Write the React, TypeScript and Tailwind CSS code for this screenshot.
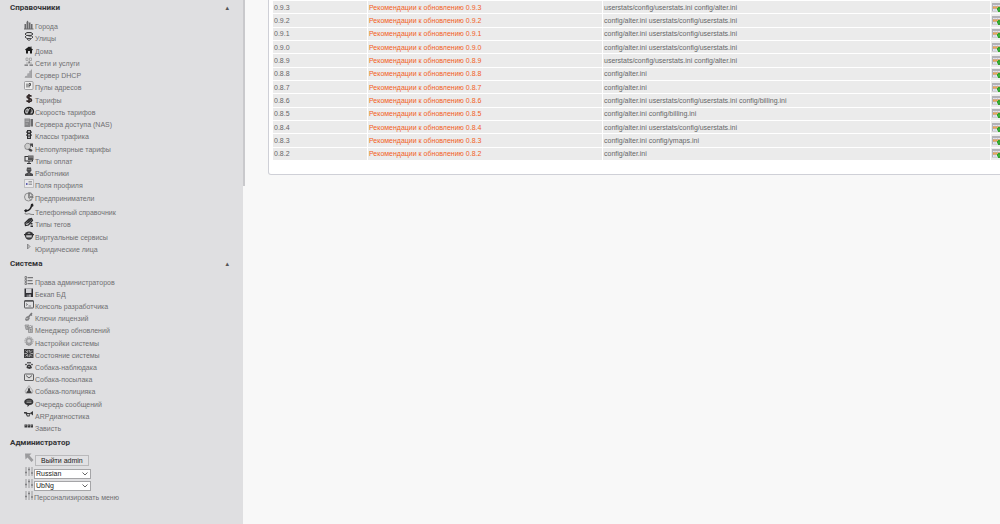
import type { ReactNode } from "react";

type MenuItem = { label: string; icon: ReactNode; row?: string };

const short = "h-3";
const tall = "h-[13px]";

const Icon = ({ children }: { children: ReactNode }) => (
  <svg viewBox="0 0 20 20" className="size-[10px] shrink-0 overflow-visible" fill="none" aria-hidden="true">
    {children}
  </svg>
);

const Sliders = () => (
  <Icon>
    <path d="M4 0v18M10 0v18M16 0v18" stroke="#9a9a9c" strokeWidth="2" />
    <path d="M2 11h4M8 5h4M14 12h4" stroke="#808082" strokeWidth="3" />
  </Icon>
);

const directories: MenuItem[] = [
  {
    label: "Города",
    icon: <path d="M1 17V8h3v9zM5 17V4l2-3 2 3v13zM10 17V5h3v12zM14 17V8h3v9zM0 17h19v2H0z" fill="#68686a" />,
  },
  {
    label: "Улицы",
    row: tall,
    icon: (
      <>
        <path d="M6 1h8l4 3-4 3H5L2 4z" fill="#ccc" stroke="#3d3d3f" strokeWidth="2" />
        <path d="M5 7l-3 3 4 3h8M9 8h6l3 2-3 3-5 4-4-3" stroke="#4a4a4c" strokeWidth="2" />
      </>
    ),
  },
  {
    label: "Дома",
    icon: <path d="M10 3L2 9l2 2v6h4v-5h4v5h4v-6l2-2-3-2V3h-2v2z" fill="#1c1c1c" />,
  },
  {
    label: "Сети и услуги",
    icon: (
      <>
        <path d="M4 2h4v5H4zM11 2h4v5h-4zM10 9v4M4 12h12" stroke="#98989a" strokeWidth="1.5" />
        <path d="M1 16h7M11 16h7M9 10h3" stroke="#6b6b6d" strokeWidth="2.5" />
      </>
    ),
  },
  {
    label: "Сервер DHCP",
    icon: (
      <>
        <path d="M1 18h14V2l-4 2v4L7 9v4l-4 1z" fill="#b3b3b5" />
        <path d="M4 17v-3M8 17V9M12 17V4M15 18V1" stroke="#929294" strokeWidth="1.5" />
      </>
    ),
  },
  {
    label: "Пулы адресов",
    row: tall,
    icon: (
      <>
        <rect x="1" y="1" width="17" height="16" rx="2" fill="#eee" stroke="#8a8a8c" strokeWidth="1.5" />
        <path d="M6 5v8M10 13V5h3v4h-3" stroke="#555" strokeWidth="2" />
      </>
    ),
  },
  {
    label: "Тарифы",
    icon: <path d="M15 5c-2-3-9-3-9 1 0 4 9 2 9 6 0 4-8 4-10 1M10 0v18" stroke="#302626" strokeWidth="3" />,
  },
  {
    label: "Скорость тарифов",
    icon: (
      <>
        <path d="M3 16a9 8 0 1 1 14 0z" fill="#b5b5b7" stroke="#1c1c1c" strokeWidth="2.5" />
        <path d="M8 15l4-9h2l-2 9zM4 10h3M9 4v2M14 10h2" fill="#1c1c1c" stroke="#1c1c1c" strokeWidth="1.5" />
      </>
    ),
  },
  {
    label: "Сервера доступа (NAS)",
    icon: (
      <>
        <path d="M1 1h11v17H1z" fill="#858587" />
        <path d="M13 2h5v15h-5z" fill="#6a6a6c" />
        <path d="M3 4h7M3 7h7M3 12h5" stroke="#b5b5b7" strokeWidth="1.5" />
      </>
    ),
  },
  {
    label: "Классы трафика",
    row: tall,
    icon: (
      <>
        <path d="M6 0h8v18H6zM4 3h12l-1 3H5zM4 9h12l-1 3H5z" fill="#303032" />
        <path d="M10 2v3M10 8v3M10 13v3" stroke="#d8d8da" strokeWidth="3" />
      </>
    ),
  },
  {
    label: "Непопулярные тарифы",
    icon: (
      <>
        <path d="M2 9a6 6 0 1 1 11 0l-5 4-5-1z" fill="#ccc" stroke="#747476" strokeWidth="1.5" />
        <path d="M12 1h6v7h-2V5l-3 2zM8 13l4-2 5 3-1 3h-4z" fill="#444446" />
      </>
    ),
  },
  {
    label: "Типы оплат",
    icon: (
      <>
        <path d="M1 2h9v2H3v7h13V9h2v4h-7v3h3v2H6v-2h3v-3H1z" fill="#343436" />
        <path d="M8 1h11v9H8z" fill="#555557" />
        <path d="M9 4h9" stroke="#ddd" strokeWidth="1" />
      </>
    ),
  },
  {
    label: "Работники",
    icon: (
      <>
        <path d="M6 1h8l1 6-3 4H8L5 7zM2 18v-4l6-3h4l6 3v4z" fill="#4b4b4d" />
        <path d="M7 5h6M10 12v5" stroke="#999" strokeWidth="1" />
      </>
    ),
  },
  {
    label: "Поля профиля",
    row: tall,
    icon: (
      <>
        <path d="M1 1h18v16H1z" fill="#e8e8eb" stroke="#99999b" strokeWidth="1" />
        <path d="M4 10h3" stroke="#5c5db0" strokeWidth="4" />
        <path d="M9 5h7M9 8h7M9 11h7" stroke="#88888a" strokeWidth="1.5" />
      </>
    ),
  },
  {
    label: "Предприниматели",
    icon: (
      <>
        <circle cx="9" cy="10" r="8" fill="#ddd" stroke="#747476" strokeWidth="1.5" />
        <path d="M9 1v10h10M9 11l5 6M11 1c5 1 7 4 7 8h-7z" stroke="#707072" strokeWidth="1.5" />
      </>
    ),
  },
  {
    label: "Телефонный справочник",
    row: "h-3.5 pt-0.5",
    icon: (
      <>
        <path d="M14-4l4-1 1 5-3 2c-2 5-5 8-10 9l-3 2-3-4 4-3 2 2c4-1 6-4 7-7z" fill="#202022" />
        <path d="M1 14c4 5 7 0 11 2 2 1 4 1 8 1" stroke="#555" strokeWidth="1.5" />
      </>
    ),
  },
  {
    label: "Типы тегов",
    row: tall,
    icon: (
      <>
        <path d="M10 2l5-1 2 4-8 9-6 1-1-5z" fill="#d0d0d2" stroke="#2b2b2d" strokeWidth="2.5" />
        <path d="M3 12l7-2 6-6-1-3-5 1z" fill="#39393b" />
        <path d="M13 10h4v3h-4zM13 15h5v3h-5z" fill="#343436" />
      </>
    ),
  },
  {
    label: "Виртуальные сервисы",
    icon: (
      <>
        <circle cx="10" cy="9" r="7" fill="#c5c5c7" stroke="#363638" strokeWidth="2.5" />
        <path d="M0 7h20M3 4l7 3 7-3M6 14h8" stroke="#303032" strokeWidth="2.5" />
      </>
    ),
  },
  {
    label: "Юридические лица",
    icon: <path d="M7 2l5 5-5 5z" fill="#bbb" stroke="#77777a" strokeWidth="1.5" />,
  },
];

const system: MenuItem[] = [
  {
    label: "Права администраторов",
    icon: (
      <>
        <path d="M2 1h3v4H2zM2 7h3v4H2zM2 13h3v4H2z" stroke="#68686a" strokeWidth="1.5" />
        <path d="M7 3h11M7 9h10M7 15h11" stroke="#77777a" strokeWidth="2.5" />
      </>
    ),
  },
  {
    label: "Бекап БД",
    icon: (
      <>
        <path d="M1 1h17v17H1z" fill="#303035" />
        <path d="M4 1h11v9H4z" fill="#d2d2d6" />
        <path d="M5 13h9v5H5z" fill="#77777c" />
        <path d="M11 13h2v4h-2z" fill="#ddd" />
      </>
    ),
  },
  {
    label: "Консоль разработчика",
    icon: (
      <>
        <rect x="1" y="1" width="18" height="15" rx="1" fill="#e0e0e2" stroke="#58585a" strokeWidth="2" />
        <path d="M4 7l3 2-3 2M9 12h5M2 3h16" stroke="#58585a" strokeWidth="1.5" />
      </>
    ),
  },
  {
    label: "Ключи лицензий",
    icon: (
      <>
        <path d="M8 11l8-9M12 4l4 3" stroke="#77777a" strokeWidth="3" />
        <path d="M8 8l4 4-3 5-5 1-2-3 2-5z" fill="#858587" />
        <path d="M5 14l2-2" stroke="#ddd" strokeWidth="2" />
      </>
    ),
  },
  {
    label: "Менеджер обновлений",
    row: tall,
    icon: (
      <>
        <path d="M2 2h8v9H4zM9 7h8v10H9z" fill="#bbb" stroke="#8a8a8c" strokeWidth="1.5" />
        <path d="M5 5h3M5 8h3M12 11h3M12 14h3M13 2l2 3 3-1" stroke="#777779" strokeWidth="1.5" />
      </>
    ),
  },
  {
    label: "Настройки системы",
    icon: (
      <>
        <circle cx="10" cy="8" r="8" stroke="#959597" strokeWidth="2" strokeDasharray="3 1" />
        <circle cx="10" cy="8" r="5" fill="#d5d5d7" stroke="#a0a0a2" strokeWidth="3" />
        <path d="M4 13c4 4 9 4 12 0" stroke="#707072" strokeWidth="1.5" />
      </>
    ),
  },
  {
    label: "Состояние системы",
    icon: (
      <>
        <path d="M0 0h19v18H0z" fill="#404042" />
        <path d="M3 3l4 4 1-5M11 2l1 5 4-4M3 15l4-4 1 5M11 16l1-5 4 4M1 9h5M13 9h5" stroke="#c5c5c7" strokeWidth="1.5" />
      </>
    ),
  },
  {
    label: "Собака-наблюдака",
    icon: (
      <>
        <path d="M6 9c2-3 6-3 8 0l2 5-5 2-6-2z" fill="#39393b" />
        <path d="M3 6l2 2M8 2v3M12 2v3M17 6l-2 2" stroke="#39393b" strokeWidth="3" />
        <path d="M8 11h4" stroke="#aaa" strokeWidth="1.5" />
      </>
    ),
  },
  {
    label: "Собака-посылака",
    icon: (
      <>
        <rect x="1" y="2" width="18" height="13" rx="1" fill="#ddd" stroke="#5f5f61" strokeWidth="2" />
        <path d="M4 5l6 5 6-5" stroke="#5f5f61" strokeWidth="2" />
      </>
    ),
  },
  {
    label: "Собака-полицияка",
    row: tall,
    icon: (
      <>
        <path d="M10 1l8 11-2 5H4l-2-5z" fill="#d5d5d7" stroke="#a0a0a2" strokeWidth="1.5" />
        <path d="M8 8l2-3 2 3v3l3 3v2H5v-2l3-3z" fill="#404042" />
      </>
    ),
  },
  {
    label: "Очередь сообщений",
    icon: (
      <>
        <path d="M10 1c11 0 12 13 1 13l-4 4v-4C-3 12-1 1 10 1z" fill="#343436" />
        <path d="M5 6h10M5 9h10" stroke="#aaa" strokeWidth="1.5" />
      </>
    ),
  },
  {
    label: "ARPдиагностика",
    icon: (
      <>
        <path d="M0 4h5l2 2h5l6-4v9l-5-4-2 6H6L3 7H0z" fill="#39393b" />
        <path d="M6 8h5l-1 3H7z" fill="#ccc" />
      </>
    ),
  },
  {
    label: "Зависть",
    icon: (
      <>
        <path d="M1 5h5v6H1zM7 5h5v6H7zM13 5h5v6h-5z" fill="#39393b" />
        <path d="M2 7h3M8 7h3M14 7h3" stroke="#999" strokeWidth="1" />
      </>
    ),
  },
];

const alter = "config/alter.ini";
const userstats = "userstats/config/userstats.ini";
const billing = "config/billing.ini";

const releases = [
  { version: "0.9.3", files: [userstats, alter] },
  { version: "0.9.2", files: [alter, userstats] },
  { version: "0.9.1", files: [alter, userstats] },
  { version: "0.9.0", files: [alter, userstats] },
  { version: "0.8.9", files: [userstats, alter] },
  { version: "0.8.8", files: [alter] },
  { version: "0.8.7", files: [alter] },
  { version: "0.8.6", files: [alter, userstats, billing] },
  { version: "0.8.5", files: [alter, billing] },
  { version: "0.8.4", files: [alter, userstats] },
  { version: "0.8.3", files: [alter, "config/ymaps.ini"] },
  { version: "0.8.2", files: [alter] },
];

const MenuSection = ({ title, items }: { title: string; items: MenuItem[] }) => (
  <section>
    <h2 className="mb-1 flex h-4 items-center justify-between pr-[14px] pl-[10px] font-[Roboto,sans-serif] text-[8px] font-bold text-[#343436]">
      {title}
      <span className="font-['DejaVu_Sans',sans-serif] text-[7px] text-[#555]">▴</span>
    </h2>
    <ul className="pl-6">
      {items.map((item) => (
        <li key={item.label} className={item.row ?? short}>
          <a href="#" className="flex items-start gap-px leading-[14px] text-[#6f6f71]">
            <Icon>{item.icon}</Icon>
            {item.label}
          </a>
        </li>
      ))}
    </ul>
  </section>
);

const MenuSelect = ({ label, options }: { label: string; options: string[] }) => (
  <div className="flex h-3 items-start">
    <Sliders />
    <div className="relative mt-0.5">
      <select
        aria-label={label}
        className="block h-[10px] w-[57px] appearance-none border border-[#a5a5a7] bg-white pl-px text-[7px] leading-[8px] text-[#222]"
      >
        {options.map((option) => (
          <option key={option}>{option}</option>
        ))}
      </select>
      <svg viewBox="0 0 6 4" className="pointer-events-none absolute top-[3px] right-[3px] h-1 w-1.5" fill="none">
        <path d="M.5.5L3 3 5.500.5" stroke="#555" strokeWidth=".9" />
      </svg>
    </div>
  </div>
);

const TableIcon = () => (
  <svg viewBox="0 0 18 18" className="block size-[9px]" aria-hidden="true">
    <path d="M0 0h18v17H0z" fill="#b3b3b8" />
    <path d="M2 4h14v2H2zM2 12h10v4H2z" fill="#e2e2f3" />
    <path d="M2 7h14v4H2z" fill="#f0a54b" />
    <path d="M6 3v13M11 3v8" stroke="#c0b8b8" strokeWidth="1" />
    <path d="M12 8h5v2h2v5h-2v3h-5v-3h-2v-5h2z" fill="#31a52e" />
    <path d="M14 11v4M12 13h5" stroke="#4fbb3c" strokeWidth="1" />
  </svg>
);

const Sidebar = () => (
  <aside className="flex w-[245px] shrink-0">
    <nav className="flex grow flex-col gap-px bg-[#dfdfe1]">
      <MenuSection title="Справочники" items={directories} />
      <MenuSection title="Система" items={system} />
      <section>
        <h2 className="mb-0.5 flex h-4 items-center pl-[10px] font-[Roboto,sans-serif] text-[8px] font-bold text-[#343436]">
          Администратор
        </h2>
        <div className="pl-6">
          <div className="flex h-3.5 items-start gap-px">
            <Icon>
              <path d="M2 1h13l-4 4 8 9-4 4-8-9-4 4z" fill="#9b9b9d" />
            </Icon>
            <button
              type="button"
              className="mt-0.5 h-[11px] border border-[#b9b9bb] bg-[#e1e1e3] px-[5px] leading-[9px] text-[#222]"
            >
              Выйти admin
            </button>
          </div>
          <MenuSelect label="Язык" options={["Russian", "English", "Ukrainian"]} />
          <MenuSelect label="Тема" options={["UbNg"]} />
          <a href="#" className="flex h-3 items-start leading-[14px] text-[#6f6f71]">
            <Sliders />
            Персонализировать меню
          </a>
        </div>
      </section>
    </nav>
    <div className="h-[186px] w-0.5 bg-[#c9c9cc]" />
  </aside>
);

const App = () => {
  return (
    <div className="flex min-h-screen overflow-hidden bg-[#f8f8f8] font-['Liberation_Sans',Arial,sans-serif] text-[7px]">
      <Sidebar />
      <main className="min-w-0 grow pl-[23px]">
        <div className="-mr-10 rounded-b-[3px] border border-t-0 border-[#cfd0d7] bg-white px-[3px] pb-[13px]">
          <table className="h-[161px] w-full table-fixed border-separate border-spacing-px leading-[10px] text-[#666668]">
            <colgroup>
              <col className="w-[94px]" />
              <col className="w-[234px]" />
              <col />
              <col className="w-11" />
            </colgroup>
            <tbody>
              {releases.map(({ version, files }) => (
                <tr key={version} className="bg-[#ebebeb]">
                  <td className="px-px pt-px">{version}</td>
                  <td className="px-px pt-px">
                    <a href="#" className="text-[#f2601e]">
                      Рекомендации к обновлению {version}
                    </a>
                  </td>
                  <td className="px-px pt-px">{files.join(" ")}</td>
                  <td className="px-px">
                    <TableIcon />
                  </td>
                </tr>
              ))}
            </tbody>
          </table>
        </div>
      </main>
    </div>
  );
};

export default App;
